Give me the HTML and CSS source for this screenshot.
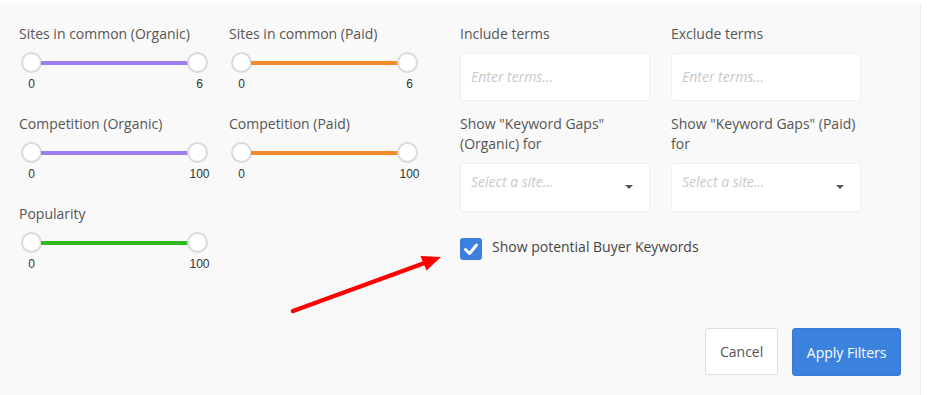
FILE: index.html
```html
<!DOCTYPE html>
<html>
<head>
<meta charset="utf-8">
<link rel="stylesheet" href="styles.css">
</head>
<body>
<div class="panel">
  <div class="content">
    <div class="sliders">
      <div class="slider-group">
        <div class="label">Sites in common (Organic)</div>
        <div class="slider"><span class="handle"></span><span class="track purple"></span><span class="handle"></span></div>
        <div class="scale"><span>0</span><span>6</span></div>
      </div>
      <div class="slider-group">
        <div class="label">Sites in common (Paid)</div>
        <div class="slider"><span class="handle"></span><span class="track orange"></span><span class="handle"></span></div>
        <div class="scale"><span>0</span><span>6</span></div>
      </div>
      <div class="slider-group">
        <div class="label">Competition (Organic)</div>
        <div class="slider"><span class="handle"></span><span class="track purple"></span><span class="handle"></span></div>
        <div class="scale"><span>0</span><span>100</span></div>
      </div>
      <div class="slider-group">
        <div class="label">Competition (Paid)</div>
        <div class="slider"><span class="handle"></span><span class="track orange"></span><span class="handle"></span></div>
        <div class="scale"><span>0</span><span>100</span></div>
      </div>
      <div class="slider-group">
        <div class="label">Popularity</div>
        <div class="slider"><span class="handle"></span><span class="track green"></span><span class="handle"></span></div>
        <div class="scale"><span>0</span><span>100</span></div>
      </div>
    </div>
    <div class="fields">
      <div class="field">
        <div class="label">Include terms</div>
        <div class="input"><span class="placeholder">Enter terms...</span></div>
      </div>
      <div class="field">
        <div class="label">Exclude terms</div>
        <div class="input"><span class="placeholder">Enter terms...</span></div>
      </div>
      <div class="field">
        <div class="label">Show "Keyword Gaps" (Organic) for</div>
        <div class="select"><span class="placeholder">Select a site...</span><span class="caret"></span></div>
      </div>
      <div class="field">
        <div class="label">Show "Keyword Gaps" (Paid) for</div>
        <div class="select"><span class="placeholder">Select a site...</span><span class="caret"></span></div>
      </div>
      <div class="check">
        <span class="box"><svg width="22" height="22" viewBox="0 0 22 22"><polyline points="5.5,11.5 9.5,15.5 16.5,7" fill="none" stroke="#fff" stroke-width="3" stroke-linecap="round" stroke-linejoin="round"/></svg></span>
        <span class="check-text">Show potential Buyer Keywords</span>
      </div>
    </div>
  </div>
  <div class="footer">
    <button class="btn cancel">Cancel</button>
    <button class="btn apply">Apply Filters</button>
  </div>
  <svg class="arrow" width="927" height="395" viewBox="0 0 927 395">
    <line x1="293" y1="311" x2="426" y2="262.5" stroke="#ff0000" stroke-width="4.5" stroke-linecap="round"/>
    <polygon points="441,257 420.5,256 426.5,270.5" fill="#ff0000"/>
  </svg>
</div>
</body>
</html>
```

FILE: styles.css
```css
html, body {
  margin: 0;
  padding: 0;
  background: #ffffff;
}

body {
  font-family: "Open Sans", "Noto Sans", sans-serif;
  font-size: 14px;
  color: #555;
}

.panel {
  position: relative;
  margin-top: 3px;
  width: 921px;
  height: 392px;
  box-sizing: border-box;
  background: #f9f9f9;
  border-right: 1px solid #ececec;
  padding: 21px 19px 19px 19px;
  display: flex;
  flex-direction: column;
}

.content {
  display: flex;
}

.label {
  line-height: 20px;
  color: #555;
}

.sliders {
  display: grid;
  grid-template-columns: 210px 231px;
  grid-auto-rows: 90px;
}

.slider-group .label {
  white-space: nowrap;
}

.slider {
  margin-top: 8px;
  margin-left: 1.5px;
  width: 187px;
  height: 21px;
  display: flex;
  align-items: center;
}

.handle {
  width: 21px;
  height: 21px;
  box-sizing: border-box;
  border: 2px solid #dadada;
  border-radius: 50%;
  background: #fff;
  flex: none;
}

.track {
  flex: 1;
  height: 4px;
  margin: 0 -1px;
}

.purple { background: #9b7ef3; }
.orange { background: #f58a2d; }
.green { background: #2fba1e; }

.scale {
  margin-top: 4px;
  margin-left: 2px;
  width: 189px;
  display: flex;
  justify-content: space-between;
  font-family: "Liberation Sans", Arial, sans-serif;
  font-size: 12px;
  line-height: 14px;
  color: #333;
}

.scale span {
  width: 21px;
  text-align: center;
  white-space: nowrap;
}

.fields {
  display: grid;
  grid-template-columns: 211px 211px;
  row-gap: 13px;
  align-content: start;
}

.field .label {
  width: 190px;
  margin-bottom: 9px;
}

.input, .select {
  width: 190px;
  height: 48px;
  box-sizing: border-box;
  background: #fff;
  border: 1px solid #efefef;
  border-radius: 3px;
}

.input {
  display: flex;
  align-items: center;
  padding: 0 10px;
}

.select {
  height: 49px;
  display: flex;
  justify-content: space-between;
  align-items: flex-start;
  padding: 7.5px 16px 0 10px;
}

.placeholder {
  font-style: italic;
  color: #c8c8c8;
  line-height: 20px;
}

.caret {
  margin-top: 13.5px;
  width: 0;
  height: 0;
  border-left: 4.5px solid transparent;
  border-right: 4.5px solid transparent;
  border-top: 4.5px solid #555;
}

.check {
  grid-column: span 2;
  margin-top: 13px;
  display: flex;
  align-items: center;
  gap: 10px;
}

.box {
  width: 22px;
  height: 22px;
  border-radius: 3px;
  background: #3b7fe0;
  display: flex;
}

.check-text {
  color: #444;
  line-height: 20px;
  margin-top: -5px;
}

.footer {
  margin-top: auto;
  display: flex;
  justify-content: flex-end;
  gap: 14px;
}

.btn {
  height: 48px;
  box-sizing: border-box;
  padding: 0 14px;
  border-radius: 3px;
  font-family: "Open Sans", "Noto Sans", sans-serif;
  font-size: 14px;
  white-space: nowrap;
  cursor: pointer;
}

.cancel {
  height: 47px;
  padding: 0 14px;
  background: #fff;
  border: 1px solid #dedede;
  color: #555;
}

.apply {
  padding: 0 13.5px;
  background: #3b82de;
  border: 1px solid #3a7ad2;
  color: #fff;
}

.arrow {
  position: absolute;
  left: 0;
  top: -3px;
  pointer-events: none;
}
```
